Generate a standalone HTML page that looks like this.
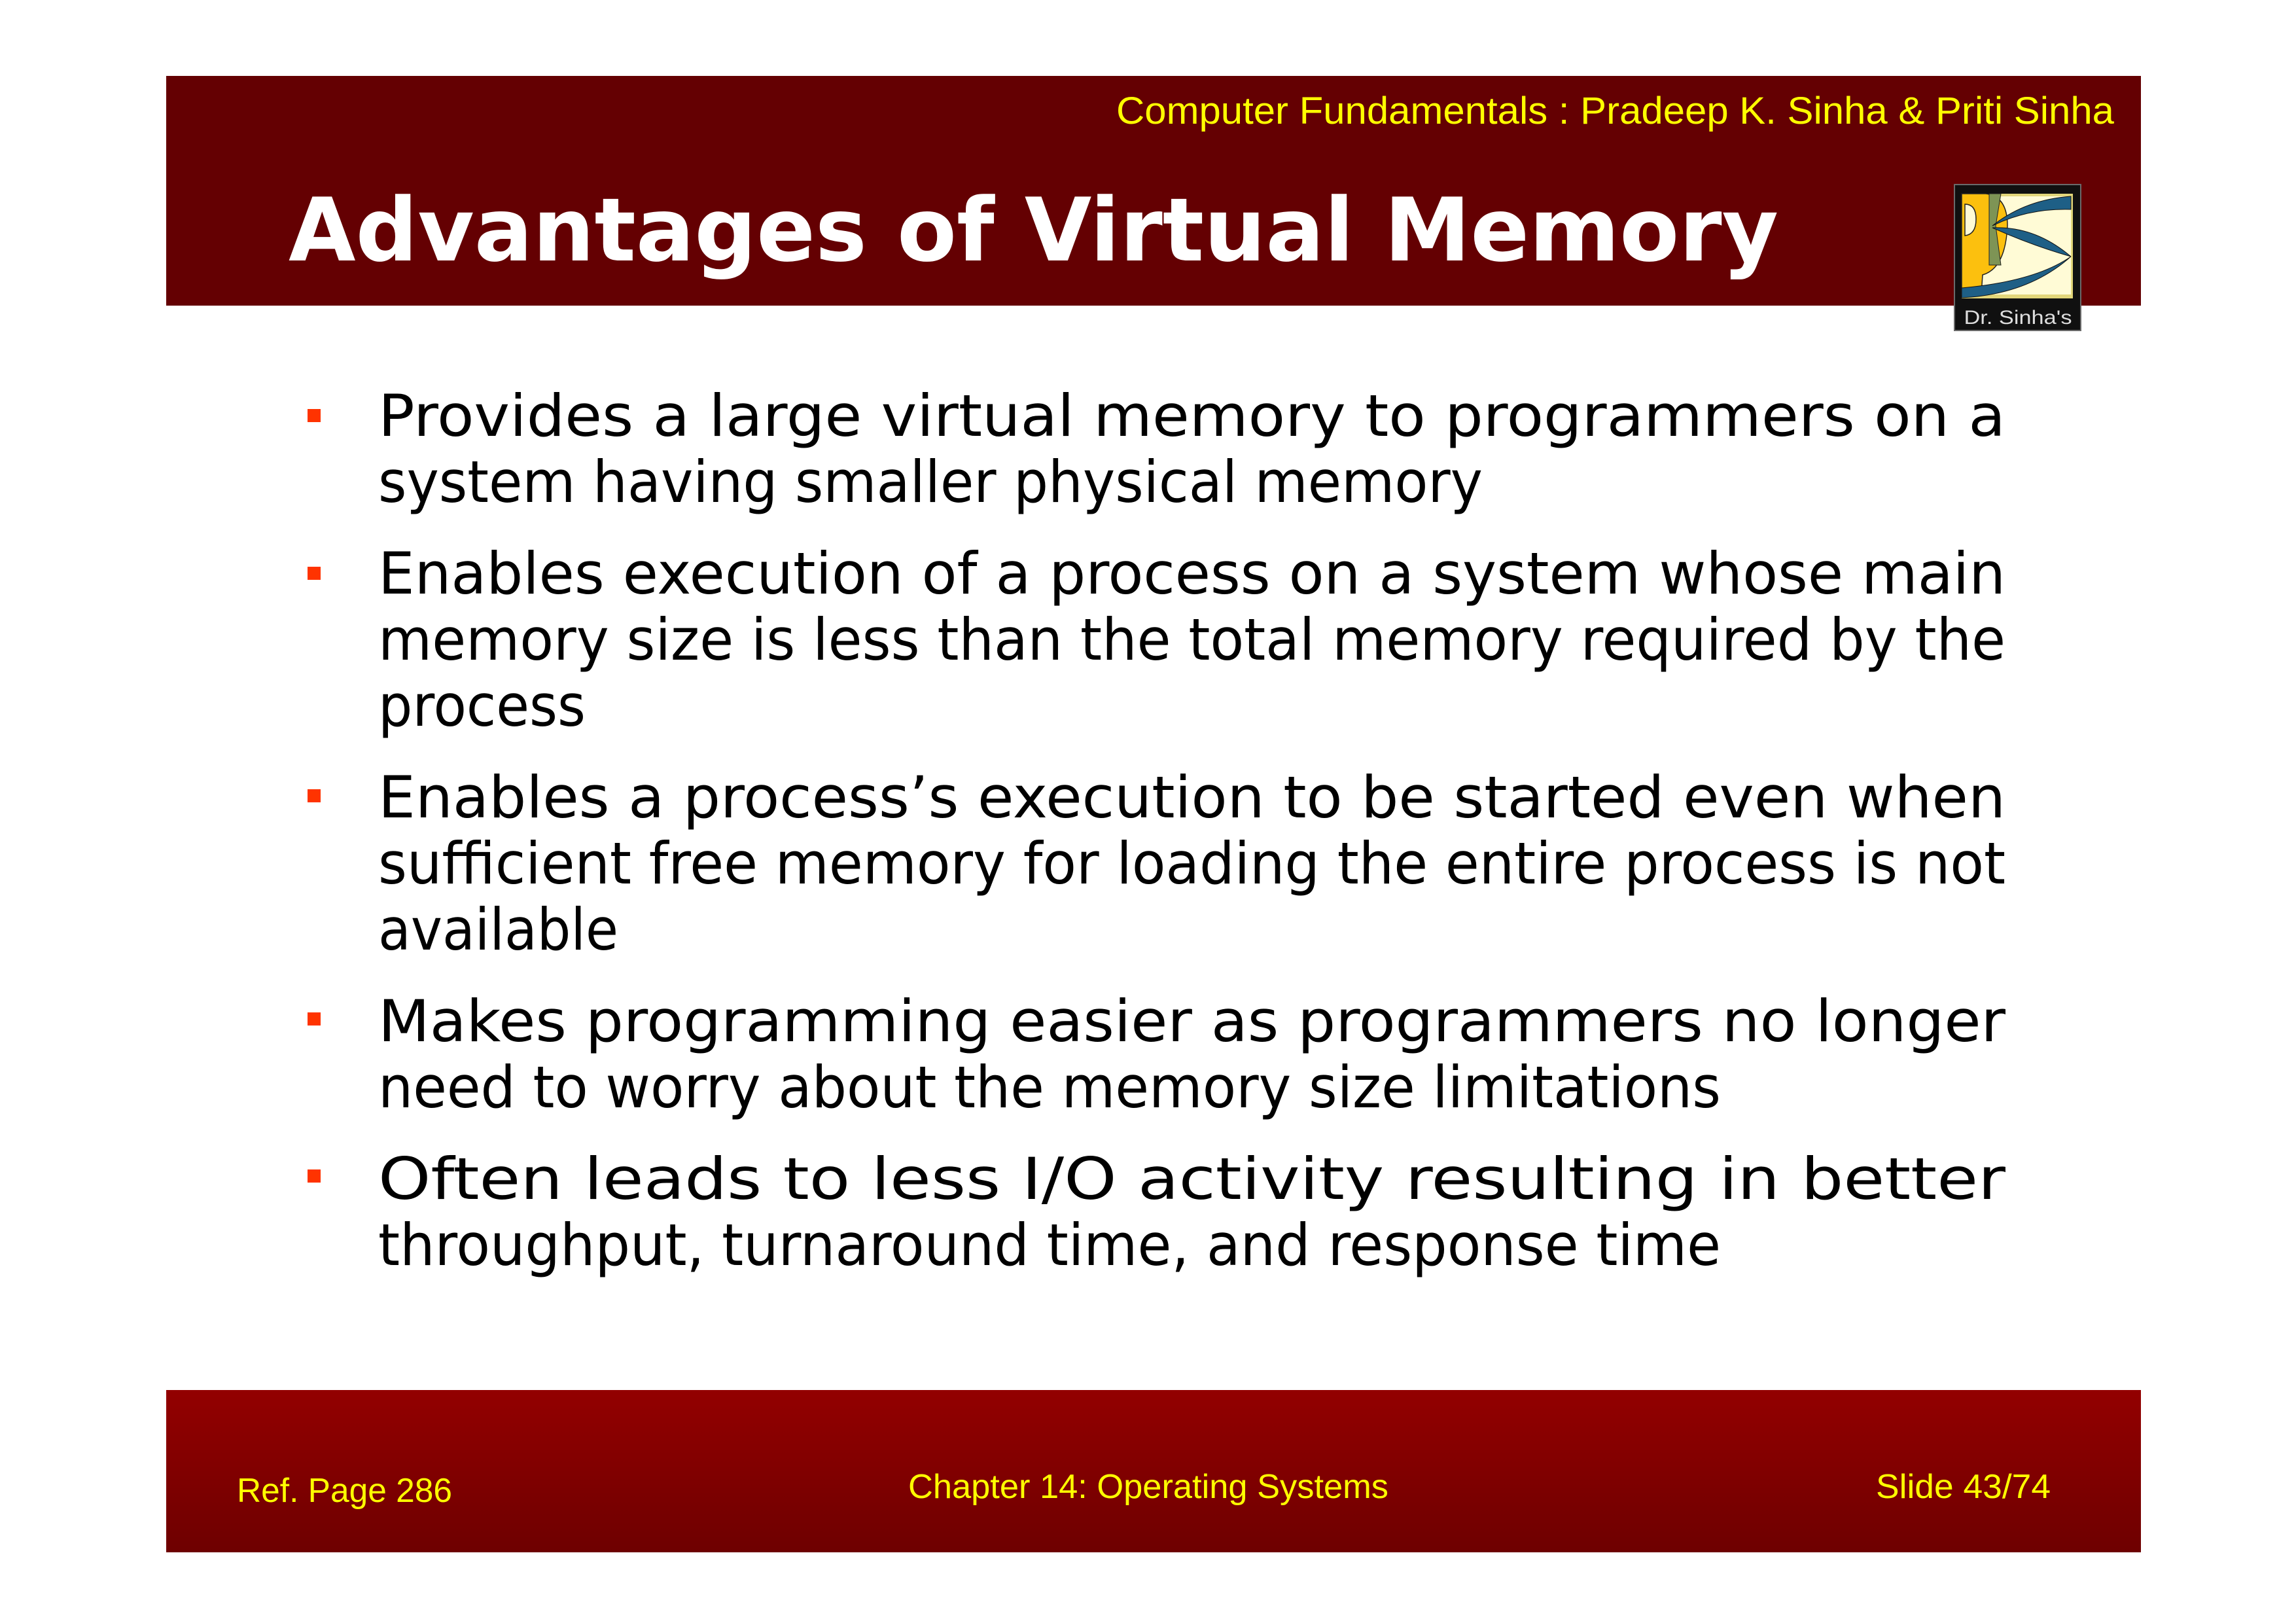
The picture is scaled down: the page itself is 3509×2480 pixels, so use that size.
<!DOCTYPE html>
<html><head><meta charset="utf-8"><style>
html,body{margin:0;padding:0;background:#fff;width:3509px;height:2480px;overflow:hidden}
svg{display:block}
</style></head><body>
<svg width="3509" height="2480" viewBox="0 0 3509 2480" xmlns="http://www.w3.org/2000/svg">
<defs>
<linearGradient id="ft" x1="0" y1="0" x2="0" y2="1">
<stop offset="0" stop-color="#930000"/><stop offset="1" stop-color="#6e0000"/>
</linearGradient>
</defs>
<rect x="0" y="0" width="3509" height="2480" fill="#fff"/>
<!-- header -->
<rect x="254" y="116" width="3018" height="351" fill="#640002"/>
<text x="3231" y="189" text-anchor="end" font-family="Liberation Sans, sans-serif" font-size="58" fill="#ffff00" textLength="1525" lengthAdjust="spacingAndGlyphs">Computer Fundamentals : Pradeep K. Sinha &amp; Priti Sinha</text>
<text x="441" y="398" font-family="DejaVu Sans, sans-serif" font-weight="bold" font-size="134" fill="#fff" textLength="2277" lengthAdjust="spacingAndGlyphs">Advantages of Virtual Memory</text>
<!-- logo -->
<g>
<rect x="2986" y="281" width="195" height="225" fill="#6a6a6a"/>
<rect x="2988" y="283" width="191" height="221" fill="#101010"/>
<rect x="2998" y="296" width="170" height="160" fill="#e2d67a"/>
<path d="M3030 300 L3165 300 L3165 450 L3000 450 Z" fill="#fffbd6"/>
<path d="M2998 296 L3035 296 Q3068 300 3068 345 Q3065 410 3030 420 L3028 450 L2998 450 Z" fill="#fcc00e" stroke="#222" stroke-width="1.5"/>
<path d="M3003 312 Q3020 312 3020 335 Q3020 358 3003 360 Z" fill="#fffbd6" stroke="#222" stroke-width="1.5"/>
<path d="M3040 296 L3058 296 L3050 345 L3058 405 L3040 405 Z" fill="#7e9455" stroke="#222" stroke-width="1"/>
<path d="M3165 300 L3165 320 Q3100 318 3045 345 Q3095 305 3165 300 Z" fill="#1e5f86" stroke="#111" stroke-width="1"/>
<path d="M3045 348 Q3110 345 3165 392 Q3105 375 3045 348 Z" fill="#1e5f86" stroke="#111" stroke-width="1"/>
<path d="M3165 392 Q3110 430 2998 440 L2998 455 Q3100 450 3165 392 Z" fill="#1e5f86" stroke="#111" stroke-width="1"/>
<text x="3084" y="495" text-anchor="middle" font-family="Liberation Sans, sans-serif" font-size="30" fill="#ddd" textLength="165" lengthAdjust="spacingAndGlyphs">Dr. Sinha's</text>
</g>
<!-- bullets -->
<g fill="#ff3300">
<rect x="470" y="625" width="20" height="20"/>
<rect x="470" y="866" width="20" height="20"/>
<rect x="470" y="1206" width="20" height="20"/>
<rect x="470" y="1547" width="20" height="20"/>
<rect x="470" y="1787" width="20" height="20"/>
</g>
<g font-family="DejaVu Sans, Verdana, sans-serif" font-size="88" fill="#000">
<text x="578" y="666" textLength="2487" lengthAdjust="spacingAndGlyphs">Provides  a  large  virtual  memory  to  programmers  on  a</text>
<text x="578" y="767" textLength="1688" lengthAdjust="spacingAndGlyphs">system having smaller physical memory</text>
<text x="578" y="907" textLength="2487" lengthAdjust="spacingAndGlyphs">Enables  execution  of  a  process  on  a  system  whose  main</text>
<text x="578" y="1008" textLength="2487" lengthAdjust="spacingAndGlyphs">memory size is less than the total memory required by the</text>
<text x="578" y="1109" textLength="317" lengthAdjust="spacingAndGlyphs">process</text>
<text x="578" y="1249" textLength="2487" lengthAdjust="spacingAndGlyphs">Enables  a  process’s  execution  to  be  started  even  when</text>
<text x="578" y="1350" textLength="2487" lengthAdjust="spacingAndGlyphs">sufficient free memory for loading the entire process is not</text>
<text x="578" y="1451" textLength="367" lengthAdjust="spacingAndGlyphs">available</text>
<text x="578" y="1591" textLength="2487" lengthAdjust="spacingAndGlyphs">Makes   programming   easier   as   programmers   no   longer</text>
<text x="578" y="1692" textLength="2052" lengthAdjust="spacingAndGlyphs">need to worry about the memory size limitations</text>
<text x="578" y="1832" textLength="2487" lengthAdjust="spacingAndGlyphs">Often    leads    to    less    I/O    activity    resulting    in    better</text>
<text x="578" y="1933" textLength="2052" lengthAdjust="spacingAndGlyphs">throughput, turnaround time, and response time</text>
</g>
<!-- footer -->
<rect x="254" y="2124" width="3018" height="248" fill="url(#ft)"/>
<g font-family="Liberation Sans, sans-serif" font-size="52" fill="#ffff00">
<text x="362" y="2295" textLength="329" lengthAdjust="spacingAndGlyphs">Ref. Page  286</text>
<text x="1388" y="2289" textLength="734" lengthAdjust="spacingAndGlyphs">Chapter 14: Operating Systems</text>
<text x="2867" y="2289" textLength="267" lengthAdjust="spacingAndGlyphs">Slide 43/74</text>
</g>
</svg>
</body></html>
